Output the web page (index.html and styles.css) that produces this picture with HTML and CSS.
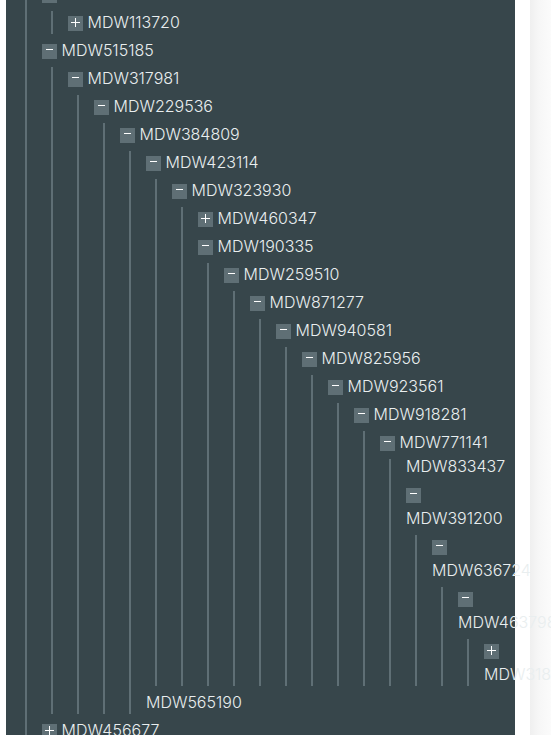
FILE: index.html
```html
<!DOCTYPE html>
<html lang="en">
<head>
<meta charset="utf-8">
<title>Tree</title>
<link rel="stylesheet" href="styles.css">
</head>
<body>
<div class="panel">
  <ul class="tree root">
    <li>
      <div class="row"><span class="tog minus"></span> <span class="label">MDW702214</span></div>
      <ul class="tree">
        <li><div class="row"><span class="tog plus"></span> <span class="label">MDW113720</span></div></li>
      </ul>
    </li>
    <li>
      <div class="row"><span class="tog minus"></span> <span class="label">MDW515185</span></div>
      <ul class="tree">
        <li>
          <div class="row"><span class="tog minus"></span> <span class="label">MDW317981</span></div>
          <ul class="tree">
            <li>
              <div class="row"><span class="tog minus"></span> <span class="label">MDW229536</span></div>
              <ul class="tree">
                <li>
                  <div class="row"><span class="tog minus"></span> <span class="label">MDW384809</span></div>
                  <ul class="tree">
                    <li>
                      <div class="row"><span class="tog minus"></span> <span class="label">MDW423114</span></div>
                      <ul class="tree">
                        <li>
                          <div class="row"><span class="tog minus"></span> <span class="label">MDW323930</span></div>
                          <ul class="tree">
                            <li><div class="row"><span class="tog plus"></span> <span class="label">MDW460347</span></div></li>
                            <li>
                              <div class="row"><span class="tog minus"></span> <span class="label">MDW190335</span></div>
                              <ul class="tree">
                                <li>
                                  <div class="row"><span class="tog minus"></span> <span class="label">MDW259510</span></div>
                                  <ul class="tree">
                                    <li>
                                      <div class="row"><span class="tog minus"></span> <span class="label">MDW871277</span></div>
                                      <ul class="tree">
                                        <li>
                                          <div class="row"><span class="tog minus"></span> <span class="label">MDW940581</span></div>
                                          <ul class="tree">
                                            <li>
                                              <div class="row"><span class="tog minus"></span> <span class="label">MDW825956</span></div>
                                              <ul class="tree">
                                                <li>
                                                  <div class="row"><span class="tog minus"></span> <span class="label">MDW923561</span></div>
                                                  <ul class="tree">
                                                    <li>
                                                      <div class="row"><span class="tog minus"></span> <span class="label">MDW918281</span></div>
                                                      <ul class="tree">
                                                        <li>
                                                          <div class="row"><span class="tog minus"></span> <span class="label">MDW771141</span></div>
                                                          <ul class="tree">
                                                            <li><div class="row leaf"><span class="label">MDW833437</span></div></li>
                                                            <li>
                                                              <div class="row"><span class="tog minus"></span> <span class="label">MDW391200</span></div>
                                                              <ul class="tree">
                                                                <li>
                                                                  <div class="row"><span class="tog minus"></span> <span class="label">MDW636724</span></div>
                                                                  <ul class="tree">
                                                                    <li>
                                                                      <div class="row"><span class="tog minus"></span> <span class="label">MDW463798</span></div>
                                                                      <ul class="tree">
                                                                        <li><div class="row"><span class="tog plus"></span> <span class="label">MDW318452</span></div></li>
                                                                      </ul>
                                                                    </li>
                                                                  </ul>
                                                                </li>
                                                              </ul>
                                                            </li>
                                                          </ul>
                                                        </li>
                                                      </ul>
                                                    </li>
                                                  </ul>
                                                </li>
                                              </ul>
                                            </li>
                                          </ul>
                                        </li>
                                      </ul>
                                    </li>
                                  </ul>
                                </li>
                              </ul>
                            </li>
                          </ul>
                        </li>
                      </ul>
                    </li>
                    <li><div class="row leaf tall"><span class="label">MDW565190</span></div></li>
                  </ul>
                </li>
              </ul>
            </li>
          </ul>
        </li>
      </ul>
    </li>
    <li><div class="row"><span class="tog plus"></span> <span class="label">MDW456677</span></div></li>
  </ul>
</div>
</body>
</html>
```

FILE: styles.css
```css
html, body {
  height: 735px;
  overflow: hidden;
}

body {
  margin: 0;
  background: linear-gradient(to right, #ffffff 0, #ffffff 530px, #efefef 530px, #f6f6f6 538px, #fbfbfb 551px);
}

.panel {
  display: flow-root;
  margin-left: 6px;
  width: 509px;
  background: #37464b;
}

.tree {
  list-style: none;
  margin: 0 0 0 9px;
  padding: 0 0 0 17px;
  background: linear-gradient(#5f6f75, #5f6f75) 0 5px / 2px 100% no-repeat;
}

.tree.root {
  margin: -22px 0 0 19px;
  background-position: 0 0;
}

.row {
  font-family: Inter, "Noto Sans", sans-serif;
  font-size: 16px;
  font-weight: 300;
  line-height: 24px;
  color: #e9eeef;
}

.row.tall {
  padding-top: 4px;
}

.tog {
  position: relative;
  display: inline-block;
  width: 15px;
  height: 15px;
  margin: 10px 0 3px;
  vertical-align: bottom;
  background: #5f6f75;
}

.tog::before {
  content: "";
  position: absolute;
  background: #ffffff;
}

.tog.minus::before {
  left: 4px;
  top: 5px;
  width: 7px;
  height: 1px;
}

.tog.plus::before {
  left: 3px;
  top: 6px;
  width: 9px;
  height: 1px;
}

.tog.plus::after {
  content: "";
  position: absolute;
  left: 7px;
  top: 2px;
  width: 1px;
  height: 9px;
  background: #ffffff;
}
```
